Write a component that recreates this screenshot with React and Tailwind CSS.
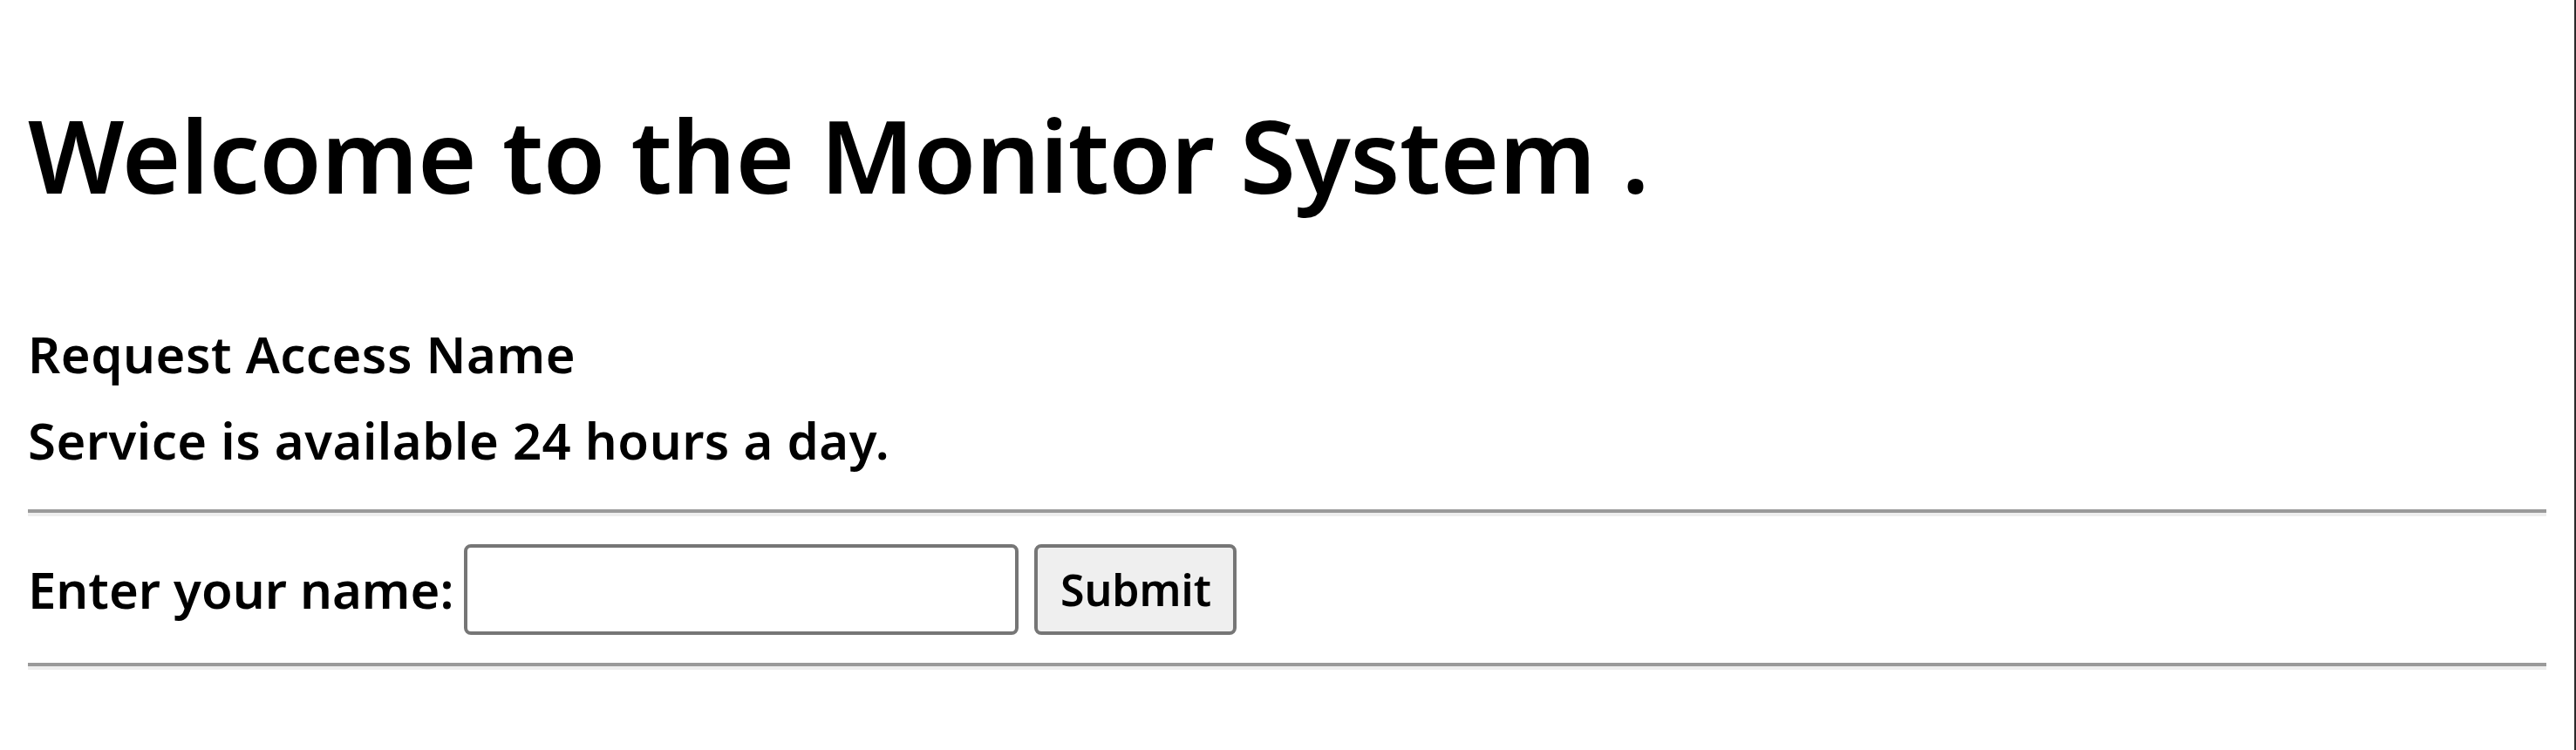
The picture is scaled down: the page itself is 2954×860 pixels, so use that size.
import { useState } from 'react'

const font = { fontFamily: '"Noto Sans", "Open Sans", sans-serif' }

export default function App() {
  const [name, setName] = useState('')

  return (
    <div className="flex min-h-screen bg-white text-black" style={font}>
      <div className="flex-1 px-8">
        <h1 className="mt-[113px] text-[116px] font-semibold leading-[128px] tracking-[-0.5px]">
          Welcome to the Monitor System .
        </h1>

        <div className="mt-[115px] text-[58px] font-semibold leading-[99px] tracking-[0.5px]">
          <p>Request Access Name</p>
          <p>Service is available 24 hours a day.</p>
        </div>

        <hr className="mt-[30px] border-t-4 border-b-4 border-t-[#9a9a9a] border-b-[#eeeeee]" />

        <form
          className="mt-8 flex h-[104px] items-center"
          onSubmit={e => e.preventDefault()}
        >
          <label className="text-[58px] font-semibold leading-none">
            Enter your name:
          </label>
          <input
            type="text"
            value={name}
            onChange={e => setName(e.target.value)}
            className="ml-[12px] h-[104px] w-[636px] rounded-lg border-4 border-[#767676] bg-white px-2 text-[53px] outline-none"
          />
          <button
            type="submit"
            className="ml-[18px] h-[104px] w-[232px] rounded-lg border-4 border-[#767676] bg-[#efefef] text-[50px] font-semibold leading-none"
          >
            Submit
          </button>
        </form>

        <hr className="mt-8 border-t-4 border-b-4 border-t-[#9a9a9a] border-b-[#eeeeee]" />
      </div>
      <div className="w-[2px] shrink-0 bg-[#2b2b2b]" />
    </div>
  )
}
